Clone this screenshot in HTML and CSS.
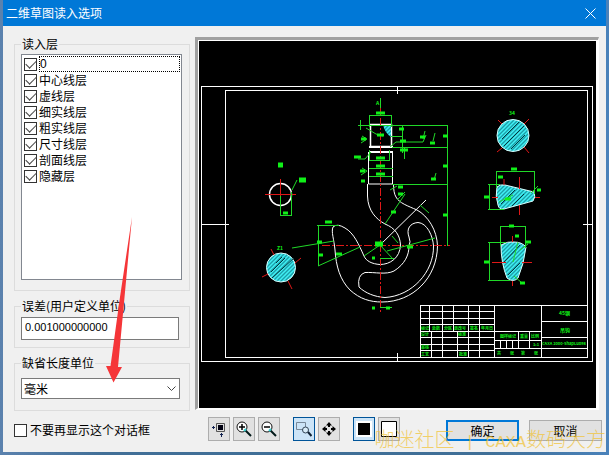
FILE: index.html
```html
<!DOCTYPE html>
<html lang="zh-CN">
<head>
<meta charset="utf-8">
<title>二维草图读入选项</title>
<link rel="stylesheet" href="styles.css">
</head>
<body>
<main class="dialog">
  <header class="titlebar">
    <h1>二维草图读入选项</h1>
    <button class="close" type="button" aria-label="关闭"><svg width="11" height="11" viewBox="0 0 11 11"><path d="M.5 .5l10 10M10.500 .5l-10 10" stroke="#fff" fill="none"/></svg></button>
  </header>
  <div class="content">
    <div class="options">
      <fieldset class="group layers">
        <legend>读入层</legend>
        <div class="list">
          <label class="row"><input type="checkbox" checked><span class="focused">0</span></label>
          <label class="row"><input type="checkbox" checked><span>中心线层</span></label>
          <label class="row"><input type="checkbox" checked><span>虚线层</span></label>
          <label class="row"><input type="checkbox" checked><span>细实线层</span></label>
          <label class="row"><input type="checkbox" checked><span>粗实线层</span></label>
          <label class="row"><input type="checkbox" checked><span>尺寸线层</span></label>
          <label class="row"><input type="checkbox" checked><span>剖面线层</span></label>
          <label class="row"><input type="checkbox" checked><span>隐藏层</span></label>
        </div>
      </fieldset>
      <fieldset class="group tolerance">
        <legend><label for="tol">误差(用户定义单位)</label></legend>
        <input id="tol" class="field" type="text" value="0.001000000000">
      </fieldset>
      <fieldset class="group unit">
        <legend><label for="unit">缺省长度单位</label></legend>
        <div class="combo">
          <select id="unit"><option>毫米</option></select>
          <svg class="chevron" width="9" height="6" viewBox="0 0 9 6"><path d="M.5 .5l4 4 4-4" fill="none" stroke="#444"/></svg>
        </div>
      </fieldset>
      <label class="skip"><input type="checkbox"><span>不要再显示这个对话框</span></label>
      <svg class="arrow" width="30" height="168" viewBox="104 216 30 168"><path d="M132 217L118 367l4 0-8.500 15.500L106 366l4.500 0L120 297z" fill="#f53538"/></svg>
    </div>

    <div class="preview">
      <div class="canvas">
      <svg viewBox="199 41 397 367" role="img" aria-label="图纸预览">
        <defs>
          <pattern id="hatch" width="4" height="4" patternUnits="userSpaceOnUse"><rect width="4" height="4" fill="#1c9ea8"/><path d="M-1 5L5-1M-1 1L1-1M3 5L5 3" stroke="#40f0f4" stroke-width="1.500"/></pattern>
        </defs>
        <rect x="199" y="41" width="397" height="367" fill="#000"/>
        <g class="white">
          <path class="crisp" d="M201.500 86.500h391v275h-391zM225.500 90.500h362v267h-362zM397.500 86v8M397.500 353v8M201 224.500h28M583 224.500h9"/>
          <circle cx="280.500" cy="194.500" r="11" stroke-width="1.500"/>
          <path d="M370.500 124.500h21v22h-21z" stroke-width="1.500"/>
          <path d="M369 147h24M369 152h24" stroke-width="2"/>
          <path d="M368.500 152v32h24v-32M367.500 184v12C368 211 376 219 385 224C395 228 400 235 400.500 245C400 258 390 264.500 380 264.500C372 264 366 261 364 256C359 245 354 233 345 228Q337 223 333 227C331 232 334 239 335 250C336 266 340 280 350 290C360 299 370 302 382 302C413 302 437 278 437.500 246C437 230 428 216 417 210C408 206 399 203 396 197Q393.500 193 393.500 184M380 245L426 200"/>
          <path d="M409 237C406 229 410 223 418 222.500C427 223 433 236 433.500 246C434 272 412 296 385 297.500C375 297 365 293 359 287Q357 275 365 272.500C375 272 386 275 394 271C405 264 409 255 409 246Q411 242 409 237z"/>
        </g>
        <g class="section">
          <circle cx="281" cy="267.500" r="14.500"/>
          <circle cx="513" cy="135.500" r="16"/>
          <path d="M497 187Q500 184 505 185L534 192Q536 197 533 201L504 209Q499 210 498 205Q495 196 497 187z"/>
          <path d="M501 245Q508 241 514 242Q522 242 526 247Q524 264 518 278Q513 283 507 278Q501 263 501 245z"/>
          <path d="M383 125h8v12q-6-4-8-12z" stroke="none"/>
        </g>
        <path class="grain" d="M271 272l14-14M276 263l6-6M272 278l22-20M502 139l17-17M504 146l20-20M511 149l14-14M501 204l14-14M512 206l12-12M504 262l16-17M508 275l12-12"/>
        <g class="red crisp">
          <path d="M380.500 104V312M322 245.500H450" stroke-dasharray="8 2 2 2"/>
          <path d="M265 194.500h31M280.500 179v31"/>
        </g>
        <g class="red">
          <path d="M262 277l6-3M295 263l6-5M271 249l3 6M288 281l4 8M498 120l4 4M524 147l5 6M529 119l-5 5M497 152l5-4M492 197.500h6M535 197.500h5M519.500 177v12M519.500 205v10M492 262.500h14M522 262.500h10M512.500 236v6M512.500 281v5M504 179v6"/>
        </g>
        <g class="green crisp">
          <path d="M380.500 98v10M369.500 127v-12h22v12M358 125.500h90M360.500 120v10M369.500 150v10h20v-10M368.500 168.500h24M368.500 176.500h24M392 147.500h56M392 184.500h56M447.500 125v121M402.500 125v28M404.500 147v12M391 136.500h12M280.500 196v19M291.500 192v24M280 215.500h12M318.500 225v41M317 225.500h22M496.500 188v-17h38v23M489.500 184.500v25M488 184.500h12M488 209.500h16M500.500 246v-20h25v22M489.500 242v38M488 242.500h18M488 280.500h22M380 307.500h12M380 258.500h14"/>
        </g>
        <g class="green">
          <path d="M292 248l42-7M318 266l42-19M364 256l16-11 13 14M387 251l48-13M385 224l20-30M392 236l6 7M420 205l9 8M366 128l10 6 7 2M390 147l6-5h27l3-7M358 159h7l6-7M362 136l5 3-6 4M362 168l5 3-6 4M423 139l2-8M433 141l2-8M434 180l2-7M390 190l7-4M292 190l5-10M531 193l7-7M499 202l14-7M513 262l5-20M514 276l8 7M520 250l8-6M397 200l8-8"/>
          <path class="marks" d="M376 113h9M377 135h7M376 158h9M376 166h9M376 174h9M354 157h7M361 139h5M360 171h5M361 181h4M399 129h5M400 141h6M400 150h8M420 137h5M430 143h5M431 179h5M443 136h5M443 166h5M443 215h5M283 213h5M325 222h7M317 242h5M318 255h5M336 254h6M391 212h5M398 194h5M398 187h5M407 247h6M511 169h6M498 177h5M484 197h5M537 190h4M484 262h5M509 226h5M515 236h4M526 242h5M520 283h5M372 308h3M386 308h4M372 258h3M505 199h6"/>
          <path class="marks bold" d="M299 180h7M278 165h5M375 244h8"/>
        </g>
        <g class="note">
          <text x="277" y="250">Z1</text><text x="509" y="115">34</text><text x="376" y="105">A</text>
        </g>
        <g class="white crisp">
          <path d="M420.500 305.500h167M420.500 305v52M420.500 311.500h74M420.500 318.500h74M420.500 324.500h74M420.500 331.500h121M420.500 337.500h74M420.500 344.500h74M420.500 350.500h74M429.500 305v26M442.500 305v26M453.500 305v26M468.500 305v52M479.500 305v52M431.500 331v26M442.500 331v26M457.500 331v26M494.500 305v52M541.500 305v52M494.500 340.500h47M494.500 348.500h47M500.500 340v8M506.500 340v8M512.500 340v8M518.500 331v17M529.500 331v17M541.500 321.500h46M541.500 337.500h46M541.500 348.500h46"/>
        </g>
        <g class="note small">
          <text x="421" y="330">标记</text><text x="432" y="330">处数</text><text x="444" y="330">分区</text><text x="454" y="330">更改号</text><text x="470" y="330">签名</text><text x="481" y="330">年月日</text>
          <text x="421" y="336">设计</text><text x="458" y="336">标准</text><text x="421" y="349">审核</text><text x="421" y="356">工艺</text><text x="459" y="356">批准</text>
          <text x="500" y="338">图样标记</text><text x="520" y="338">重量</text><text x="531" y="338">比例</text><text x="533" y="346">1:1</text>
          <text x="497" y="355">共</text><text x="510" y="355">张</text><text x="521" y="355">第</text><text x="534" y="355">张</text>
          <text x="542" y="345">CAXA 2000-ShapLuo98</text>
        </g>
        <g class="note">
          <text x="559" y="315">45钢</text><text x="560" y="332">吊钩</text>
        </g>
      </svg>
      </div>
      <div class="toolbar">
        <button class="tool" type="button" aria-label="定位"><svg width="16" height="16" viewBox="0 0 16 16"><path d="M5.500 2.500h8v8h-8z" fill="#ddd" stroke="#555"/><path d="M7 4h5v5H7z" fill="#001"/><path d="M1 6.500h3M2.500 5v3M10.500 12v4M9 13.500h3" stroke="#102050" fill="none"/></svg></button>
        <button class="tool" type="button" aria-label="放大"><svg width="16" height="16" viewBox="0 0 16 16"><path d="M9 9l6 6" stroke="#001818" stroke-width="2"/><circle cx="6" cy="6" r="5" fill="#fff" stroke="#111"/><path d="M3 6h6M6 3v6" stroke="#000" stroke-width="1.500"/><path d="M8 10l2-2" stroke="#3cc" stroke-width="2"/></svg></button>
        <button class="tool" type="button" aria-label="缩小"><svg width="16" height="16" viewBox="0 0 16 16"><path d="M9 9l6 6" stroke="#001818" stroke-width="2"/><circle cx="6" cy="6" r="5" fill="#fff" stroke="#111"/><path d="M3 6h6" stroke="#000" stroke-width="1.500"/><path d="M8 10l2-2" stroke="#3cc" stroke-width="2"/></svg></button>
        <button class="tool on spaced" type="button" aria-label="窗口放大"><svg width="16" height="16" viewBox="0 0 16 16"><path d="M.5 1.500h9v7h-9z" fill="none" stroke="#778899"/><circle cx="9.500" cy="9" r="3" fill="#d8ecf8" stroke="#345"/><path d="M12 11l3.500 4" stroke="#123" stroke-width="2"/></svg></button>
        <button class="tool" type="button" aria-label="平移"><svg width="16" height="16" viewBox="0 0 16 16"><path d="M8 1l3 3.500H9V6H7V4.500H5zM8 15l3-3.500H9V10H7v1.500H5zM1 8l3.500-3v2H6v2H4.500v2zM15 8l-3.500-3v2H10v2h1.500v2z" fill="#000"/></svg></button>
        <button class="tool on spaced" type="button" aria-label="黑色背景"><svg width="16" height="16" viewBox="0 0 16 16"><path d="M0 0h16v16H0z" fill="#fff"/><path d="M2 2h12v12H2z" fill="#000"/></svg></button>
        <button class="tool" type="button" aria-label="白色背景"><svg width="16" height="16" viewBox="0 0 16 16"><path d="M.5 .5h15v15H.5z" fill="#fff" stroke="#000"/></svg></button>
        <div class="actions">
          <button class="push primary" type="button">确定</button>
          <button class="push" type="button">取消</button>
        </div>
      </div>
    </div>
  </div>
  <p class="watermark">咖迷社区<span> | CAXA</span>数码大方</p>
</main>
</body>
</html>
```

FILE: styles.css
```css
* { box-sizing: border-box; }

body {
  margin: 0;
  padding: 0 3px 3px;
  min-height: 100vh;
  background: linear-gradient(90deg, #5b82ae, #416f97 17%, #3f6f97 80%, #4a82ba);
  font: 12px/14px "Noto Sans CJK SC", sans-serif;
  color: #000;
}

button, input, select { font: inherit; color: inherit; margin: 0; }

.dialog { position: relative; background: #f0f0f0; }

.titlebar {
  display: flex;
  align-items: center;
  justify-content: space-between;
  height: 26px;
  padding: 0 10px 0 3px;
  background: #0078d7;
  color: #fff;
}
.titlebar h1 { margin: 0; font-size: 12px; font-weight: 400; }
.close { display: flex; padding: 0; border: 0; background: none; }

.content {
  display: grid;
  grid-template-columns: 176px 1fr;
  gap: 5px;
  padding: 11px 7px 11px 11px;
}

.options { position: relative; display: flex; flex-direction: column; }

.group {
  min-width: 0;
  margin: 0 0 8px;
  padding: 3px 7px 10px 6px;
  border: 1px solid #dcdcdc;
}
.group legend { padding: 0 1px; }
.layers { display: flex; flex-direction: column; flex: 1; }
.list { flex: 1; padding: 1px 1px 1px 2px; border: 1px solid #828790; background: #fff; }

.row { display: flex; align-items: center; gap: 2px; height: 16px; }
.row span { flex: 1; height: 16px; line-height: 16px; }
.row .focused { border: 1px dotted #000; font-family: "Liberation Sans", sans-serif; line-height: 14px; }

input[type="checkbox"] {
  appearance: none;
  width: 13px;
  height: 13px;
  border: 1px solid #333;
  background: #fff;
  display: grid;
  place-items: center;
}
input[type="checkbox"]:checked::before {
  content: "";
  width: 9px;
  height: 5px;
  border: solid #444;
  border-width: 0 0 1px 1px;
  transform: translateY(-1px) rotate(-45deg);
}

.tolerance { padding: 4px 10px 7px 6px; }
.field {
  display: block;
  width: 100%;
  height: 23px;
  padding: 0 3px 3px;
  border: 1px solid #7a7a7a;
  background: #fff;
  font: 11px "Liberation Sans", sans-serif;
}

.unit { margin-bottom: 12px; padding: 8px 9px 11px 6px; }
.combo { position: relative; }
.combo select {
  appearance: none;
  display: block;
  width: 100%;
  height: 21px;
  padding: 0 2px;
  border: 1px solid #7a7a7a;
  border-radius: 0;
  background: #fff;
}
.chevron { position: absolute; right: 4px; top: 8px; pointer-events: none; }

.skip { display: flex; align-items: center; gap: 3px; margin-bottom: 4px; }
.arrow { position: absolute; left: 90px; top: 179px; pointer-events: none; }

.preview { min-width: 0; }
.canvas {
  border: 3px solid #a0a0a0;
  border-right: 1px solid #fff;
  border-bottom: 2px solid #fff;
  padding: 1px 2px 0 1px;
  background: #fff;
}
.canvas svg { display: block; width: 100%; height: auto; }

.white { fill: none; stroke: #fff; }
.red { fill: none; stroke: #e01818; }
.green { fill: none; stroke: #20d828; }
.section { fill: url(#hatch); stroke: #d8ffff; }
.grain { fill: none; stroke: #03383e; }
.crisp { shape-rendering: crispEdges; }
.marks { stroke: #10f018; stroke-width: 3px; }
.marks.bold { stroke-width: 5px; }
.note { fill: #10f018; font-size: 5px; font-weight: 700; }
.note.small { font-size: 4px; }

.toolbar { display: flex; align-items: flex-start; gap: 3px; margin: 7px -3px 0 13px; }
.tool {
  display: grid;
  place-items: center;
  width: 22px;
  height: 24px;
  padding: 0;
  border: 1px solid #adadad;
  background: #e1e1e1;
}
.tool.on { border-color: #005499; background: #cce4f7; }
.spaced { margin-left: 10px; }

.actions { display: flex; gap: 10px; margin: 3px 0 0 auto; }
.push {
  width: 73px;
  height: 21px;
  padding: 0;
  border: 1px solid #adadad;
  background: #e1e1e1;
}
.push.primary { border: 2px solid #0078d7; }

.watermark {
  position: absolute;
  right: 0;
  bottom: -2px;
  margin: 0;
  font: 300 20px/22px "Noto Sans CJK SC", sans-serif;
  color: #f2c230;
  opacity: 0.7;
  white-space: pre;
  pointer-events: none;
}
.watermark span { font: 17px/22px "Liberation Mono", monospace; }
```
